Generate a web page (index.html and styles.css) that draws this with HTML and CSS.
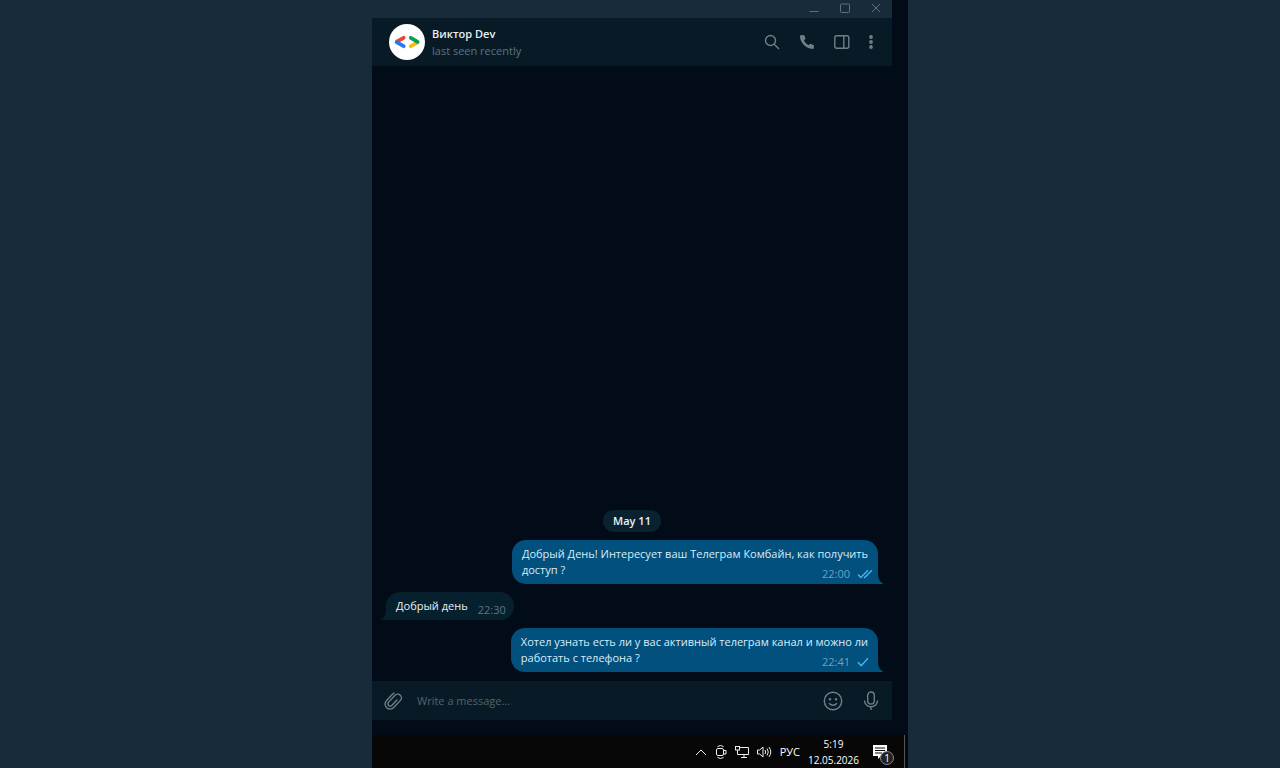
FILE: index.html
```html
<!DOCTYPE html>
<html lang="ru">
<head>
<meta charset="utf-8">
<meta name="viewport" content="width=device-width, initial-scale=1">
<title>Виктор Dev</title>
<link rel="stylesheet" href="styles.css">
</head>
<body>
<div class="desktop">
  <main class="window">
    <div class="titlebar">
      <button class="win-btn" aria-label="Minimize"><svg width="12" height="12" viewBox="0 0 12 12"><path d="M1.5 9.500h9"/></svg></button>
      <button class="win-btn" aria-label="Maximize"><svg width="12" height="12" viewBox="0 0 12 12"><rect x="1.5" y="2" width="9" height="8.500" rx="1"/></svg></button>
      <button class="win-btn" aria-label="Close"><svg width="12" height="12" viewBox="0 0 12 12"><path d="M2 2l8 8M10 2l-8 8"/></svg></button>
    </div>
    <header class="chat-header">
      <svg class="avatar" width="36" height="36" viewBox="0 0 36 36" aria-hidden="true">
        <circle cx="18" cy="18" r="18" fill="#fff"/>
        <g fill="none" stroke-width="3.8" stroke-linecap="round">
          <path d="M8.2 17.4L14.6 13.8" stroke="#ea4335"/>
          <path d="M7.6 18.2L14.6 22.2" stroke="#2a78ea"/>
          <path d="M28.2 18.6L21.8 22.2" stroke="#fbbc04"/>
          <path d="M28.6 17.8L21.8 13.8" stroke="#0c9d58"/>
        </g>
      </svg>
      <div class="peer">
        <h1 class="peer-name">Виктор Dev</h1>
        <p class="peer-status">last seen recently</p>
      </div>
      <nav class="actions">
        <button class="icon-btn" aria-label="Search"><svg width="18" height="18" viewBox="0 0 18 18"><circle cx="7.5" cy="7.5" r="5"/><path d="M11.2 11.2l4.8 4.8"/></svg></button>
        <button class="icon-btn" aria-label="Call"><svg width="18" height="18" viewBox="0 0 18 18"><path class="solid" d="M2.8 2.2L5.4 1.9Q6.1 1.9 6.4 2.5L7.4 5.2Q7.6 5.8 7.1 6.3L5.9 7.4Q7.5 10.5 10.5 12.2L11.7 11.1Q12.1 10.7 12.7 10.9L15.5 11.9Q16.1 12.2 16 12.8L15.8 15Q15.6 16 14.6 15.9Q9.3 15.5 5.9 12.1Q2.3 8.500 1.900 3.300Q1.900 2.400 2.800 2.200Z"/></svg></button>
        <button class="icon-btn" aria-label="Side panel"><svg width="18" height="18" viewBox="0 0 18 18"><rect x="1.800" y="2.700" width="14" height="12.600" rx="2"/><path d="M10.800 3v12"/></svg></button>
        <button class="icon-btn" aria-label="More"><svg width="6" height="18" viewBox="0 0 6 18"><g class="solid"><circle cx="3" cy="4" r="1.900"/><circle cx="3" cy="9" r="1.900"/><circle cx="3" cy="14" r="1.900"/></g></svg></button>
      </nav>
    </header>
    <section class="messages">
      <time class="date">May 11</time>
      <article class="bubble out">
        <p>Добрый День! Интересует ваш Телеграм Комбайн, как получить<br>доступ ?</p>
        <div class="meta"><time>22:00</time><svg class="ticks" width="18" height="12" viewBox="0 0 18 12"><path d="M2 6.600l2.800 3L12 2.200M8 9.200l.600.400L16 2.200"/></svg></div>
        <svg class="tail" width="5" height="10" viewBox="0 0 5 10"><path d="M0 0Q0 7 5 9.500V10H0Z"/></svg>
      </article>
      <article class="bubble in">
        <p>Добрый день</p>
        <div class="meta"><time>22:30</time></div>
        <svg class="tail" width="5" height="10" viewBox="0 0 5 10"><path d="M5 0Q5 7 0 9.500V10H5Z"/></svg>
      </article>
      <article class="bubble out">
        <p>Хотел узнать есть ли у вас активный телеграм канал и можно ли<br>работать с телефона ?</p>
        <div class="meta"><time>22:41</time><svg class="ticks" width="18" height="12" viewBox="0 0 18 12"><path d="M2 6.200l3.200 3.400L12 2.200"/></svg></div>
        <svg class="tail" width="5" height="10" viewBox="0 0 5 10"><path d="M0 0Q0 7 5 9.500V10H0Z"/></svg>
      </article>
    </section>
    <form class="composer">
      <button type="button" class="icon-btn" aria-label="Attach"><svg width="20" height="20" viewBox="0 0 20 20"><g transform="rotate(43 10 10)"><path d="M5 6.500V14.300a5 5 0 0 0 10 0V4.500a3.700 3.700 0 0 0-7.400 0V13.800a2.300 2.300 0 0 0 4.600 0V6M5 6.500a5 5 0 0 1 .600-3.500"/></g></svg></button>
      <input class="field" type="text" placeholder="Write a message..." aria-label="Write a message">
      <button type="button" class="icon-btn" aria-label="Emoji"><svg width="20" height="20" viewBox="0 0 20 20"><circle cx="10" cy="10" r="8.700"/><path d="M6 12.200Q10 16.200 14 12.200"/><g class="solid"><circle cx="7" cy="8.300" r="1.200"/><circle cx="13" cy="8.300" r="1.200"/></g></svg></button>
      <button type="button" class="icon-btn" aria-label="Voice message"><svg width="20" height="20" viewBox="0 0 20 20"><rect x="6.700" y="1" width="6.600" height="12" rx="3.300"/><path d="M3.500 9.500a6.500 6.300 0 0 0 13 0M10 16v3"/></svg></button>
    </form>
  </main>
  <footer class="taskbar">
    <button class="tray-btn" aria-label="Show hidden icons"><svg width="14" height="16" viewBox="0 0 14 16"><path d="M2 11l5-5 5 5"/></svg></button>
    <button class="tray-btn" aria-label="Camera"><svg width="14" height="16" viewBox="0 0 14 16"><rect x="2.500" y="4.500" width="7" height="7" rx="1.500"/><path d="M9.500 6.500h2.500v3.500H9.500M3.500 2.500Q6.500 .500 9.500 2.500M3.500 13.500Q6.500 15.500 9.500 13.500"/></svg></button>
    <button class="tray-btn" aria-label="Network"><svg width="16" height="16" viewBox="0 0 16 16"><path d="M6 3.500h8.500v7H5.500M10 10.500v3M7 13.500h6M3.500 6v4.500H6"/><rect x="1.500" y="2.500" width="4" height="3.500"/></svg></button>
    <button class="tray-btn" aria-label="Volume"><svg width="16" height="16" viewBox="0 0 16 16"><path d="M1.500 6h2.200L7 3v10L3.700 10H1.500ZM9 6q1.500 2 0 4M11 4.500q2.600 3.500 0 7M13 3q3.600 5 0 10"/></svg></button>
    <button class="lang">РУС</button>
    <div class="clock"><time>5:19</time><time>12.05.2026</time></div>
    <button class="notify" aria-label="Notifications"><svg width="22" height="24" viewBox="0 0 22 24"><path fill="#fff" d="M1 5h14v11H9l-3 3v-3H1Z"/><path d="M3 8h10M3 10.500h10M3 13h7" stroke="#080808" fill="none"/></svg><span class="badge">1</span></button>
    <span class="show-desktop"></span>
  </footer>
</div>
</body>
</html>
```
FILE: styles.css
```css
* {
  box-sizing: border-box;
}

body {
  margin: 0;
  background: #172b3a;
  color: #e8f1f6;
  font: 11px/16px "Open Sans", "Noto Sans", sans-serif;
}

h1,
p {
  margin: 0;
}

button {
  padding: 0;
  border: 0;
  background: none;
  color: inherit;
  font: inherit;
}

svg {
  display: block;
  fill: none;
}

.desktop {
  display: flex;
  flex-direction: column;
  width: 41.875%;
  min-width: 400px;
  min-height: 100vh;
  margin: 0 auto;
  background: #010c18;
}

.window {
  flex: 1;
  display: flex;
  flex-direction: column;
  margin: 0 16px 15px 0;
}

.titlebar {
  display: flex;
  justify-content: flex-end;
  align-items: center;
  gap: 19px;
  height: 18px;
  padding: 0 10px 2px;
  background: #172b3a;
}

.win-btn svg {
  stroke: #5c707e;
}

.chat-header {
  display: flex;
  align-items: center;
  gap: 7px;
  height: 48px;
  padding: 0 18px 0 17px;
  background: #081a25;
}

.peer {
  flex: 1;
}

.peer-name {
  font-size: 11px;
  line-height: 17px;
  font-weight: 600;
}

.peer-status {
  line-height: 17px;
  color: #5b7586;
}

.actions {
  display: flex;
  align-items: center;
  gap: 17px;
}

.icon-btn svg {
  stroke: #6e7f8a;
  stroke-width: 1.4;
}

.icon-btn .solid {
  fill: #6e7f8a;
  stroke: none;
}

.messages {
  flex: 1;
  display: flex;
  flex-direction: column;
  justify-content: flex-end;
  gap: 8px;
  padding: 0 14px 9px;
}

.date {
  align-self: center;
  padding: 3px 10px;
  border-radius: 11px;
  background: #0a2230;
  font-weight: 600;
}

.bubble {
  position: relative;
  white-space: nowrap;
}

.out {
  display: grid;
  align-self: flex-end;
  padding: 6px 10px;
  border-radius: 14px 14px 0 14px;
  background: #02507d;
  color: #d9edf9;
}

.in {
  display: flex;
  gap: 10px;
  align-self: flex-start;
  padding: 6px 8px 6px 10px;
  border-radius: 14px 14px 14px 0;
  background: #06202d;
}

.out p,
.out .meta {
  grid-area: 1 / 1;
}

.meta {
  display: flex;
  align-items: center;
  place-self: end;
  gap: 6px;
  margin: 0 -6px -4px 0;
  color: #69a2c4;
}

.in .meta {
  margin-right: 0;
  color: #5e7584;
}

.ticks {
  stroke: #48b4ef;
  stroke-width: 1.4;
}

.tail {
  position: absolute;
  bottom: 0;
}

.out .tail {
  left: 100%;
  fill: #02507d;
}

.in .tail {
  right: 100%;
  fill: #06202d;
}

.composer {
  display: flex;
  align-items: center;
  gap: 18px;
  height: 39px;
  padding: 0 11px;
  background: #081a25;
}

.field {
  flex: 1;
  min-width: 0;
  margin-left: -4px;
  padding: 0;
  border: 0;
  outline: 0;
  background: none;
  color: inherit;
  font: inherit;
}

.field::placeholder {
  color: #52646f;
  opacity: 1;
}

.taskbar {
  display: flex;
  align-items: center;
  justify-content: flex-end;
  gap: 6px;
  height: 33px;
  padding-right: 3px;
  background: #070707;
  color: #fff;
}

.tray-btn svg {
  stroke: #eee;
}

.lang {
  margin-left: 2px;
}

.clock {
  display: flex;
  flex-direction: column;
  align-items: center;
  margin: 0 7px 0 2px;
  font-size: 10px;
}

.notify {
  position: relative;
}

.badge {
  position: absolute;
  right: 0;
  bottom: -1px;
  width: 14px;
  height: 14px;
  border: 1px solid #888;
  border-radius: 50%;
  background: #222;
  font-size: 10px;
  line-height: 12px;
}

.show-desktop {
  align-self: stretch;
  width: 1px;
  margin-left: 4px;
  background: #555;
}
```
